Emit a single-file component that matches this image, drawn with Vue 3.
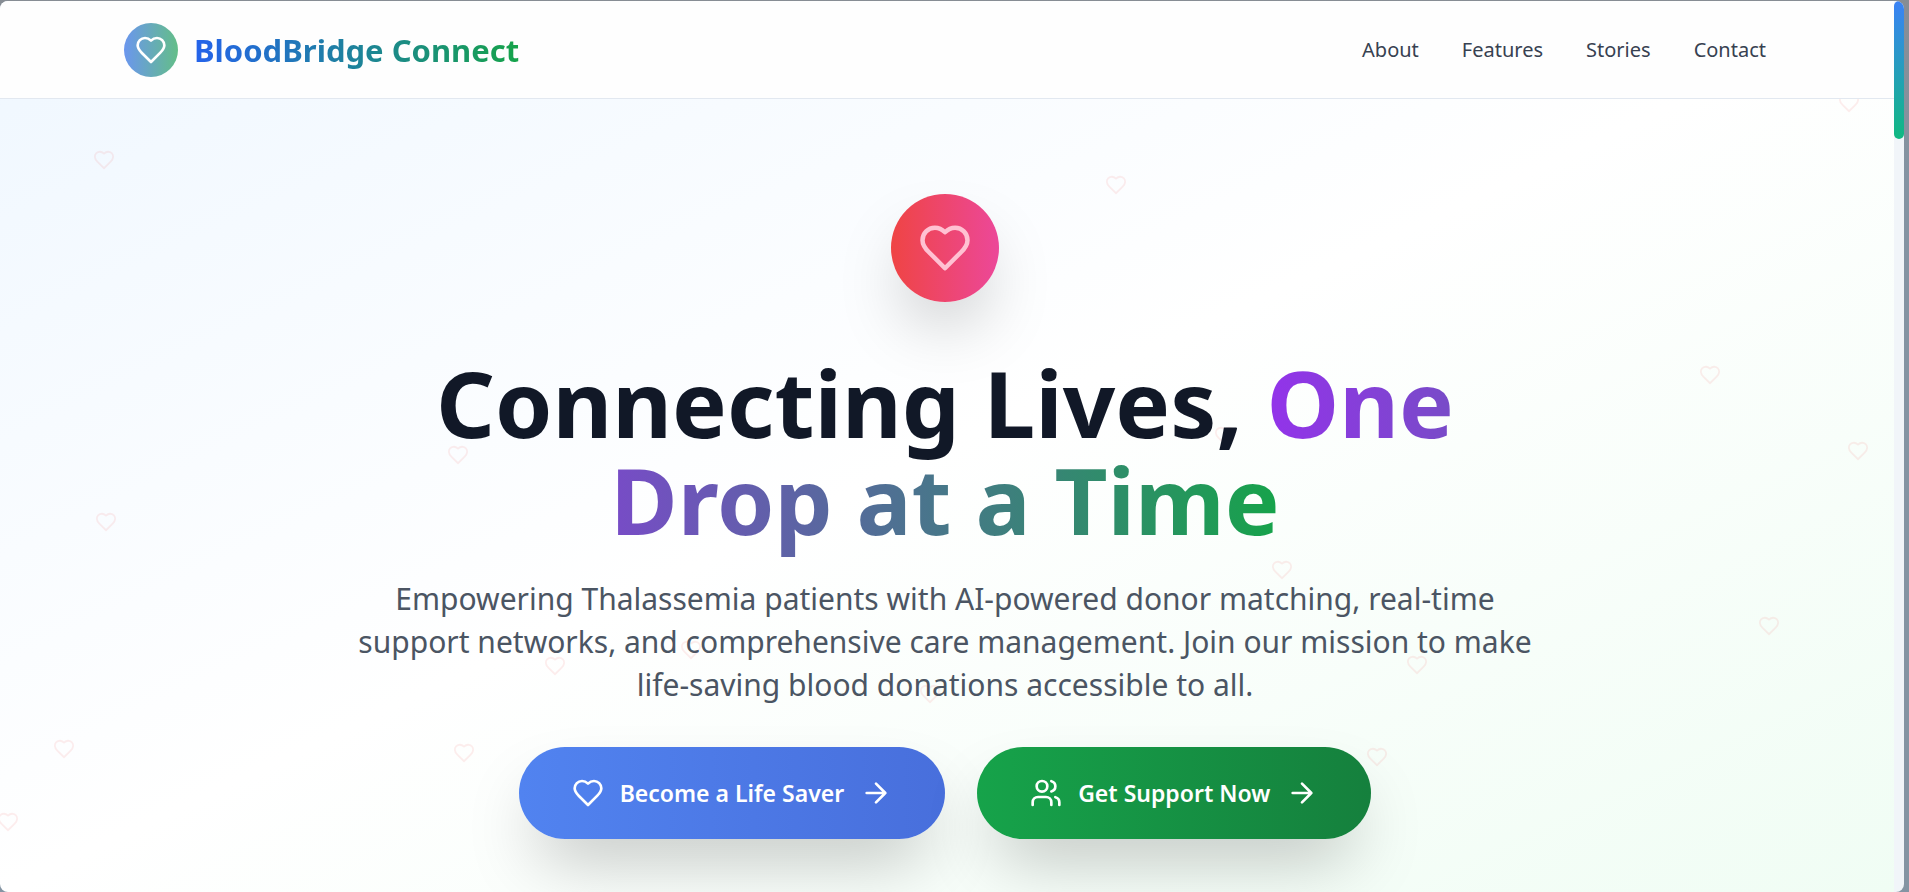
<template>
  <div class="window">
    <div class="viewport">
      <div class="page">
        <div class="floating-hearts" aria-hidden="true">
          <svg
            v-for="(heart, i) in hearts"
            :key="i"
            class="floating-heart"
            viewBox="0 0 24 24"
            :style="{ left: heart.x + '%', top: heart.y + '%' }"
          >
            <path :d="heartPath" />
          </svg>
        </div>

        <header class="header">
          <div class="header-inner">
            <a href="#" class="brand">
              <span class="brand-icon">
                <svg class="icon" viewBox="0 0 24 24"><path :d="heartPath" /></svg>
              </span>
              <span class="brand-name">BloodBridge Connect</span>
            </a>
            <nav class="nav">
              <a v-for="link in links" :key="link" :href="'#' + link.toLowerCase()" class="nav-link">{{ link }}</a>
            </nav>
          </div>
        </header>

        <main class="hero">
          <div class="hero-icon">
            <svg class="icon" viewBox="0 0 24 24"><path :d="heartPath" /></svg>
          </div>
          <h1 class="hero-title">
            Connecting Lives, <span class="hero-highlight">One<br />Drop at a Time</span>
          </h1>
          <p class="hero-text">
            Empowering Thalassemia patients with AI-powered donor matching, real-time
            support networks, and comprehensive care management. Join our mission to make
            life-saving blood donations accessible to all.
          </p>
          <div class="hero-actions">
            <button type="button" class="btn btn-donor">
              <svg class="icon" viewBox="0 0 24 24"><path :d="heartPath" /></svg>
              <span>Become a Life Saver</span>
              <svg class="icon" viewBox="0 0 24 24"><path d="M5 12h14M12 5l7 7-7 7" /></svg>
            </button>
            <button type="button" class="btn btn-support">
              <svg class="icon" viewBox="0 0 24 24">
                <path d="M16 21v-2a4 4 0 0 0-4-4H6a4 4 0 0 0-4 4v2" />
                <circle cx="9" cy="7" r="4" />
                <path d="M22 21v-2a4 4 0 0 0-3-3.87M16 3.13a4 4 0 0 1 0 7.75" />
              </svg>
              <span>Get Support Now</span>
              <svg class="icon" viewBox="0 0 24 24"><path d="M5 12h14M12 5l7 7-7 7" /></svg>
            </button>
          </div>
        </main>
      </div>

      <div class="scroll-track">
        <div class="scroll-thumb"></div>
      </div>
    </div>
  </div>
</template>

<script setup>
const heartPath =
  'M19 14c1.49-1.46 3-3.21 3-5.5A5.5 5.5 0 0 0 16.5 3c-1.76 0-3 .5-4.5 2-1.5-1.5-2.74-2-4.5-2A5.5 5.5 0 0 0 2 8.5c0 2.3 1.5 4.05 3 5.5l7 7Z'

const links = ['About', 'Features', 'Stories', 'Contact']

// centre points, in percent of the page
const hearts = [
  { x: 5.5, y: 17.9 },
  { x: 58.9, y: 20.6 },
  { x: 97.6, y: 11.5 },
  { x: 90.3, y: 42 },
  { x: 98.1, y: 50.5 },
  { x: 24.2, y: 51 },
  { x: 64.7, y: 48.8 },
  { x: 5.6, y: 58.5 },
  { x: 67.7, y: 63.9 },
  { x: 93.4, y: 70.1 },
  { x: 74.8, y: 74.5 },
  { x: 29.3, y: 74.6 },
  { x: 36.5, y: 72.8 },
  { x: 49.1, y: 77.8 },
  { x: 3.4, y: 84 },
  { x: 0.4, y: 92.1 },
  { x: 24.5, y: 84.4 },
  { x: 72.7, y: 84.9 },
]
</script>

<style>
body {
  margin: 0;
}
</style>

<style scoped>
.window {
  box-sizing: border-box;
  min-height: 100vh;
  padding: 1px 5px 0 0;
  display: flex;
  background: linear-gradient(#878d94, #8494a3 20%, #8494a3);
  font-family: 'Noto Sans', 'Open Sans', sans-serif;
}

.viewport {
  flex: 1;
  display: flex;
  border-radius: 8px;
  overflow: hidden;
}

.page {
  position: relative;
  flex: 1;
  padding-right: 4px;
  background: linear-gradient(to bottom right, #eff7ff, #ffffff 50%, #f0fdf4);
}

.icon {
  flex: none;
  width: 32px;
  height: 32px;
  fill: none;
  stroke: currentColor;
  stroke-width: 2;
  stroke-linecap: round;
  stroke-linejoin: round;
}

.floating-hearts {
  position: absolute;
  inset: 0;
  overflow: hidden;
}

.floating-heart {
  position: absolute;
  width: 22px;
  height: 22px;
  transform: translate(-50%, -50%);
  fill: none;
  stroke: #ef4444;
  stroke-width: 2;
  stroke-linecap: round;
  stroke-linejoin: round;
  opacity: 0.09;
}

.header {
  position: relative;
  margin-right: -4px;
  padding-right: 4px;
  background: #fefefe;
  border-bottom: 1px solid #e2e8f0;
}

.header-inner {
  box-sizing: border-box;
  max-width: 1728px;
  height: 97px;
  margin: 0 auto;
  padding: 0 43px;
  display: flex;
  align-items: center;
  justify-content: space-between;
}

.brand {
  display: flex;
  align-items: center;
  gap: 16px;
  text-decoration: none;
}

.brand-icon {
  display: flex;
  align-items: center;
  justify-content: center;
  width: 54px;
  height: 54px;
  border-radius: 50%;
  background: linear-gradient(to right, #6b96ee, #63be88);
  color: #fff;
}

.brand-name {
  padding-top: 2px;
  font-size: 31px;
  font-weight: 700;
  line-height: 43px;
  background: linear-gradient(to right, #2563eb, #16a34a);
  -webkit-background-clip: text;
  background-clip: text;
  color: transparent;
}

.nav {
  display: flex;
  gap: 43px;
}

.nav-link {
  font-size: 20px;
  line-height: 32px;
  color: #374151;
  text-decoration: none;
}

.hero {
  position: relative;
  display: flex;
  flex-direction: column;
  align-items: center;
  padding: 95px 16px 52px;
  text-align: center;
}

.hero-icon {
  display: flex;
  align-items: center;
  justify-content: center;
  width: 108px;
  height: 108px;
  border-radius: 50%;
  background: linear-gradient(to right, #ef4444, #ec4899);
  box-shadow: 0 34px 68px -16px rgba(0, 0, 0, 0.25);
  color: #ffc1d2;
}

.hero-icon .icon {
  width: 54px;
  height: 54px;
}

.hero-title {
  margin: 52px 0 29px;
  font-size: 92px;
  font-weight: 700;
  line-height: 97px;
  color: #111827;
}

.hero-highlight {
  background: linear-gradient(to right, #9333ea, #16a34a);
  -webkit-background-clip: text;
  background-clip: text;
  color: transparent;
}

.hero-text {
  max-width: 1210px;
  margin: 0 0 41px;
  font-size: 30px;
  line-height: 43px;
  color: #4b5563;
}

.hero-actions {
  display: flex;
  gap: 32px;
}

.btn {
  display: flex;
  align-items: center;
  gap: 16px;
  height: 92px;
  padding: 0 53px;
  border: none;
  border-radius: 46px;
  color: #fff;
  font-family: inherit;
  font-size: 23px;
  font-weight: 600;
  line-height: 32px;
  white-space: nowrap;
  cursor: pointer;
  box-shadow: 0 34px 68px -16px rgba(0, 0, 0, 0.25);
}

.btn-donor {
  background: linear-gradient(to right, #5183f0, #486fdc);
}

.btn-support {
  background: linear-gradient(to right, #16a34a, #15803d);
}

.scroll-track {
  width: 10px;
  background: #f1f5f9;
}

.scroll-thumb {
  height: 138px;
  border-radius: 5px;
  background: linear-gradient(#3b82f6, #10b981);
}
</style>
